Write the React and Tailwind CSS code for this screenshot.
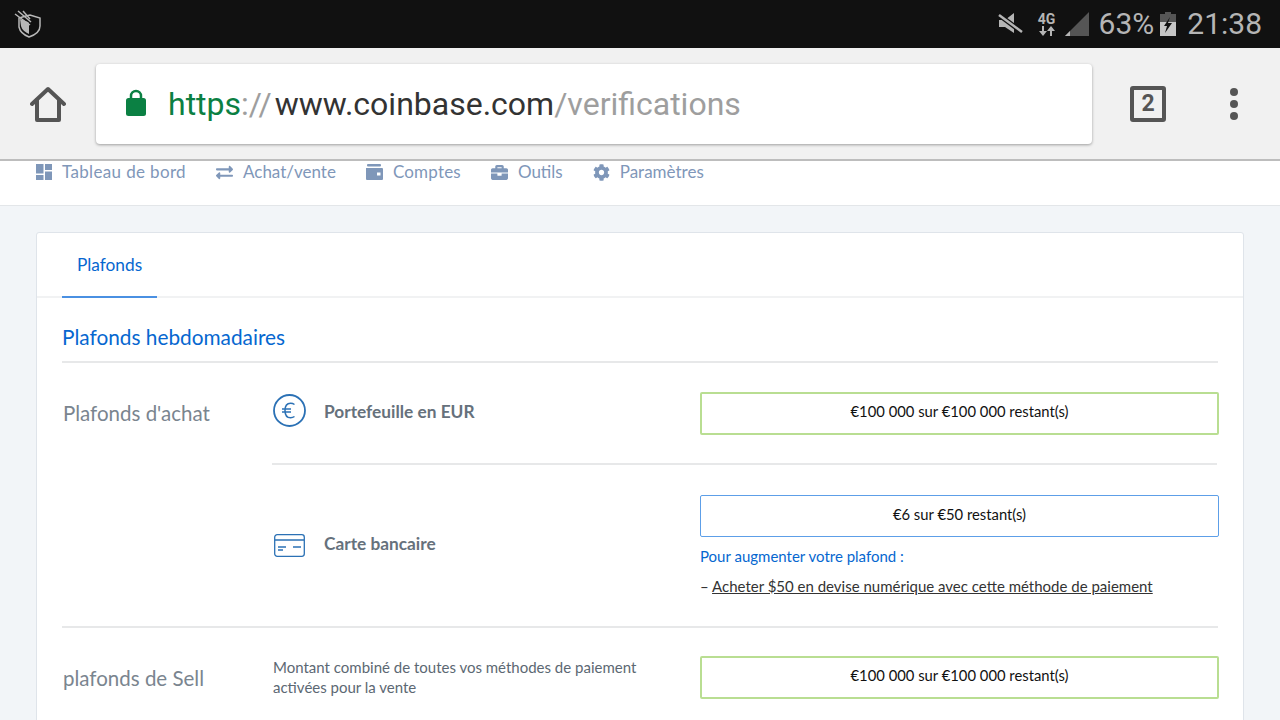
import React from 'react';
import { FaBriefcase, FaCog, FaExchangeAlt } from 'react-icons/fa';

const pageFont = "font-['Lato','Open_Sans',sans-serif]";

const navItems = [
  { label: 'Tableau de bord', icon: 'dash', spacing: 'tracking-[0.35px]' },
  { label: 'Achat/vente', icon: 'swap', spacing: '' },
  { label: 'Comptes', icon: 'wallet', spacing: 'tracking-[0.2px]' },
  { label: 'Outils', icon: 'case', spacing: '' },
  { label: 'Paramètres', icon: 'gear', spacing: '' },
];

const NavIcon = ({ name }) => {
  if (name === 'dash') {
    return (
      <svg width="16" height="16" viewBox="0 0 16 16" fill="#7f97b9">
        <rect x="0" y="0" width="7.500" height="9.500" />
        <rect x="9" y="0" width="7" height="6" />
        <rect x="0" y="11" width="7.500" height="5" />
        <rect x="9" y="7.500" width="7" height="8.500" />
      </svg>
    );
  }
  if (name === 'swap') return <FaExchangeAlt size={17} color="#7f97b9" />;
  if (name === 'wallet') {
    return (
      <svg width="17" height="16" viewBox="0 0 17 16" fill="#7f97b9">
        <rect x="1" y="0" width="14" height="2.500" rx="1" />
        <path d="M0 4h16a1 1 0 0 1 1 1v10a1 1 0 0 1-1 1H1a1 1 0 0 1-1-1zM11 8.500v3h3.500v-3z" fillRule="evenodd" />
      </svg>
    );
  }
  if (name === 'case') return <FaBriefcase size={17} color="#7f97b9" />;
  return <FaCog size={17} color="#7f97b9" />;
};

const StatusBar = () => (
  <div className="h-12 bg-[#111111] flex items-center justify-between pl-[14px] pr-[18px] font-['Roboto',sans-serif] text-[#b5b5b5]">
    <svg width="28" height="28" viewBox="0 0 28 28">
      <path d="M5 8l7-2 4-1 10 3v8c0 5-5 9-11 11-5-2-9-5-10-10z" fill="none" stroke="#b8b8b8" strokeWidth="1.500" />
      <path d="M6 9l8 3 1 1v11c-4-2-7-4-8-8z" fill="#b8b8b8" />
      <path d="M1 4l15 11M4 1l13 11M9 1l7 8" stroke="#b8b8b8" strokeWidth="1.500" />
    </svg>
    <div className="flex items-center">
      <svg width="26" height="24" viewBox="0 0 26 24" className="mr-[13px]">
        <path d="M1 8h6l9-7v20L7 15H1z" fill="#b5b5b5" />
        <path d="M1 3l23 17" stroke="#111111" strokeWidth="5" />
        <path d="M1 3l23 17" stroke="#b5b5b5" strokeWidth="2.500" />
      </svg>
      <div className="flex flex-col items-center leading-none mr-[8px] w-[20px]">
        <span className="text-[14px] font-bold leading-[14px]">4G</span>
        <svg width="16" height="10" viewBox="0 0 16 10" fill="#b5b5b5">
          <path d="M3 0h2v5h3L4 10 0 5h3zM11 10h2V5h3l-4-5-4 5h3z" />
        </svg>
      </div>
      <svg width="24" height="24" viewBox="0 0 24 24" className="mr-[10px]">
        <path d="M24 0v24H0z" fill="#555555" />
        <path d="M5 19v5H0z" fill="#b5b5b5" />
      </svg>
      <span className="text-[30px] leading-none mr-[6px]">63%</span>
      <svg width="16" height="24" viewBox="0 0 16 24" className="mr-[11px]">
        <path d="M5 0h6v2h5v22H0V2h5z" fill="#555555" />
        <path d="M0 10h16v14H0z" fill="#c6c6c6" />
        <path d="M10 5L4 14h3l-2 7 7-10H8z" fill="#111111" />
      </svg>
      <span className="text-[30px] leading-none">21:38</span>
    </div>
  </div>
);

const Toolbar = () => (
  <div className="h-[113px] bg-[#f1f1f1] border-b-2 border-[#bdbdbd] flex items-center font-['Roboto',sans-serif]">
    <div className="w-[96px] flex justify-center">
      <svg width="36" height="36" viewBox="0 0 36 36" fill="none" stroke="#555555" strokeWidth="4" strokeLinejoin="round" strokeLinecap="round">
        <path d="M2 18L18 3l16 15" />
        <path d="M7 14v20h22V14" />
      </svg>
    </div>
    <div className="w-[996px] h-20 bg-white rounded-[4px] shadow-[0_1px_3px_rgba(0,0,0,0.35)] flex items-center pl-[30px]">
      <svg width="20" height="27" viewBox="0 0 20 27" className="mr-[22px] mb-[2px]">
        <path d="M5 12V7a5 5 0 0 1 10 0V12" fill="none" stroke="#0b8043" strokeWidth="2.500" />
        <rect x="0" y="9" width="20" height="18" rx="2.500" fill="#0b8043" />
      </svg>
      <span className="text-[32px] leading-none text-[#0b8043]">https</span>
      <span className="text-[32px] leading-none text-[#9e9e9e] mr-[3px]">://</span>
      <span className="text-[32px] leading-none text-[#333333]">www.coinbase.com</span>
      <span className="text-[32px] leading-none text-[#9e9e9e]">/verifications</span>
    </div>
    <div className="w-[38px]" />
    <div className="w-9 h-9 border-[4px] border-[#555555] rounded-[3px] flex items-center justify-center text-[#555555] text-[23px] font-bold leading-none">2</div>
    <div className="ml-[64px] flex flex-col gap-[4px]">
      <div className="w-2 h-2 rounded-full bg-[#555555]" />
      <div className="w-2 h-2 rounded-full bg-[#555555]" />
      <div className="w-2 h-2 rounded-full bg-[#555555]" />
    </div>
  </div>
);

const NavBar = () => (
  <div className="h-[45px] bg-white border-b border-[#e3e6e9] flex items-start pl-[36px] gap-[30px] text-[17px] text-[#7f97b9] leading-[22px]">
    {navItems.map((item) => (
      <div key={item.label} className="flex items-center gap-[10px]">
        <NavIcon name={item.icon} />
        <span className={item.spacing}>{item.label}</span>
      </div>
    ))}
  </div>
);

const LimitBox = ({ color, children }) => (
  <div className={`h-[43px] rounded-[2px] border-2 ${color} flex items-center justify-center pb-[5px] text-[14.800px] text-[#111111]`}>
    {children}
  </div>
);

const Divider = () => <div className="h-[2px] bg-[#e7e8e9]" />;

const Card = () => (
  <div className="bg-white border border-[#dfe4ea] rounded-[3px] ml-[36px] mr-[36px] mt-[26px] h-[600px]">
    <div className="h-[65px] border-b-2 border-[#f1f2f3] px-[25px]">
      <div className="w-[95px] h-[65px] border-b-2 border-[#4a90e2] flex items-center justify-center text-[17.300px] text-[#0667d0]">
        Plafonds
      </div>
    </div>
    <div className="px-[25px]">
      <div className="h-[63px] flex items-center pt-[14px] text-[20.800px] text-[#0667d0]">Plafonds hebdomadaires</div>
      <Divider />
      <div className="flex">
        <div className="w-[210px] shrink-0 pt-[38px] pl-[1px] text-[20.500px] leading-[24px] text-[#7a858f]">Plafonds d'achat</div>
        <div className="w-[945px] shrink-0">
          <div className="flex h-[100px] pt-[29px]">
            <div className="w-[428px] shrink-0 flex items-start gap-[18px] pl-[1px] pt-[3px]">
              <svg width="33" height="33" viewBox="0 0 33 33" fill="none" stroke="#2b71b5" strokeWidth="1.800" className="-mt-[1px]">
                <circle cx="16.500" cy="16.500" r="15.500" />
                <path d="M21.500 10.500a6.500 6.500 0 0 0-4-1.300c-3.500 0-5.500 3-5.500 7.300s2 7.300 5.500 7.300a6.500 6.500 0 0 0 4-1.300M9 15h9M9 18h9" strokeWidth="1.500" />
              </svg>
              <span className="text-[17.300px] font-bold text-[#66717c] leading-[34px]">Portefeuille en EUR</span>
            </div>
            <div className="w-[519px] shrink-0 h-[43px]">
              <LimitBox color="border-[#b9de92]">€100 000 sur €100 000 restant(s)</LimitBox>
            </div>
          </div>
          <Divider />
          <div className="flex h-[161px] pt-[30px]">
            <div className="w-[428px] shrink-0 flex items-start gap-[19px] pl-[2px] pt-[32px]">
              <svg width="31" height="23" viewBox="0 0 31 23" fill="none" stroke="#2b71b5" strokeWidth="1.300" className="mt-[7px]">
                <rect x="0.700" y="0.700" width="29.600" height="21.600" rx="2.500" />
                <path d="M1 6h29M4 13h8M19 13h8M4 16h5" />
              </svg>
              <span className="text-[17.300px] font-bold text-[#66717c] leading-[34px]">Carte bancaire</span>
            </div>
            <div className="w-[519px] shrink-0">
              <div className="h-[42px] border border-[#5d9fe8] rounded-[2px] flex items-center justify-center pb-[4px] text-[14.800px] text-[#111111]">€6 sur €50 restant(s)</div>
              <div className="mt-[9px] text-[15px] leading-[20px] text-[#0667d0]">Pour augmenter votre plafond :</div>
              <div className="mt-[10px] text-[15px] leading-[20px] text-[#333333]">
                – <span className="underline">Acheter $50 en devise numérique avec cette méthode de paiement</span>
              </div>
            </div>
          </div>
        </div>
      </div>
      <Divider />
      <div className="flex pt-[28px]">
        <div className="w-[210px] shrink-0 pl-[1px] pt-[10px] text-[20.500px] leading-[24px] text-[#7a858f]">plafonds de Sell</div>
        <div className="w-[428px] shrink-0 pl-[1px] pr-[30px] pt-[1px] text-[15px] leading-[20px] text-[#5c6873]">
          Montant combiné de toutes vos méthodes de paiement activées pour la vente
        </div>
        <div className="w-[519px] shrink-0">
          <LimitBox color="border-[#b9de92]">€100 000 sur €100 000 restant(s)</LimitBox>
        </div>
      </div>
    </div>
  </div>
);

export default function App() {
  return (
    <div className="w-[1280px] h-[720px] overflow-hidden bg-[#f2f5f8]">
      <StatusBar />
      <Toolbar />
      <div className={pageFont}>
        <NavBar />
        <Card />
      </div>
    </div>
  );
}
